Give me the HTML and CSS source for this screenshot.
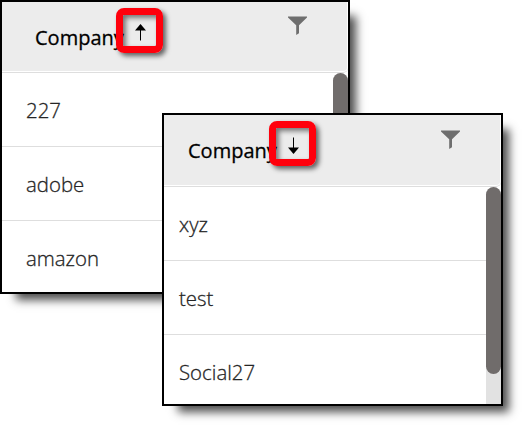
FILE: index.html
```
<!DOCTYPE html>
<html lang="en">
<head>
  <meta charset="UTF-8">
  <title>Company sorting</title>
  <link rel="stylesheet" href="styles.css">
</head>
<body>
  <div class="panel panel-asc">
    <div class="header">
      <span class="title">Company</span>
      <span class="sort">
        <svg width="11" height="17" viewBox="0 0 11 17"><path d="M5.5 0 L11 6.5 H0 Z"/><path d="M5 5h1v11.5h-1z"/></svg>
      </span>
      <svg class="filter" width="19" height="19" viewBox="0 0 19 19"><path d="M0 .5h19v1L11 9.3v7.9L8.2 19V9.3L0 1.5z"/></svg>
    </div>
    <div class="content">
      <div class="rows">
        <div class="row">227</div>
        <div class="row">adobe</div>
        <div class="row">amazon</div>
      </div>
      <div class="scrollbar"><div class="thumb"></div></div>
    </div>
  </div>

  <div class="panel panel-desc">
    <div class="header">
      <span class="title">Company</span>
      <span class="sort">
        <svg width="11" height="17" viewBox="0 0 11 17"><path d="M5.5 17 L11 10.5 H0 Z"/><path d="M5 .5h1v11.5h-1z"/></svg>
      </span>
      <svg class="filter" width="19" height="19" viewBox="0 0 19 19"><path d="M0 .5h19v1L11 9.3v7.9L8.2 19V9.3L0 1.5z"/></svg>
    </div>
    <div class="content">
      <div class="rows">
        <div class="row">xyz</div>
        <div class="row">test</div>
        <div class="row">Social27</div>
      </div>
      <div class="scrollbar"><div class="thumb"></div></div>
    </div>
  </div>
</body>
</html>
```
FILE: styles.css
```
* {
  box-sizing: border-box;
}
body {
  margin: 0;
  height: 431px;
  position: relative;
  overflow: hidden;
  background: #fff;
  font-family: "Open Sans", "Noto Sans", sans-serif;
  font-size: 20px;
  color: #252525;
}
/* the two windows overlap */
.panel {
  position: absolute;
  display: flex;
  flex-direction: column;
  overflow: hidden;
  background: #fff;
  border: 2px solid #000;
  box-shadow: 11px 11px 9px -5px rgba(0,0,0,0.7);
}
.panel-asc {
  left: 0;
  top: 0;
  width: 350px;
  height: 294px;
}
.panel-desc {
  left: 162px;
  top: 113px;
  width: 341px;
  height: 293px;
}
.header {
  display: flex;
  flex: none;
  align-items: flex-start;
  height: 71px;
  padding: 6px 41px 0 33px;
  background: #ececec;
  border-bottom: 1px solid #dedede;
  box-shadow: inset 0 -1px #fff, inset -1px 0 #fff;
  border-bottom-right-radius: 5px;
}
.panel-desc .header {
  height: 72px;
  padding-left: 24px;
}
.title {
  width: 81px;
  padding-top: 16px;
  line-height: 28px;
  color: #000;
  white-space: nowrap;
  -webkit-text-stroke: 0.3px #000;
}
/* red marker around the sort arrow */
.sort {
  display: flex;
  flex: none;
  position: relative;
  justify-content: center;
  width: 47px;
  height: 45px;
  padding: 9px 0 0 2px;
  border: 7px solid #ff000c;
  border-radius: 8px;
  box-shadow: 3px 3px 5px rgba(0,0,0,0.6), inset 3px 3px 5px rgba(0,0,0,0.5);
}
.filter {
  flex: none;
  margin: 8px 0 0 auto;
  fill: #6e6e6e;
}
.panel-desc .filter {
  margin-top: 9px;
}
.content {
  display: flex;
  flex: 1;
  min-height: 0;
}
.rows {
  flex: 1;
}
.row {
  height: 74px;
  padding-left: 24px;
  border-bottom: 1px solid #dedede;
  line-height: 75px;
  font-size: 20.4px;
  font-weight: 300;
  -webkit-text-stroke: 0.3px #252525;
}
.panel-desc .row {
  padding-left: 15px;
}
/* track is only visible below the thumb */
.scrollbar {
  width: 15px;
  background: linear-gradient(#fff 20px, #e2e2e2 20px);
}
.thumb {
  height: 187px;
  border-radius: 8px;
  background: #706c6b;
}
```
